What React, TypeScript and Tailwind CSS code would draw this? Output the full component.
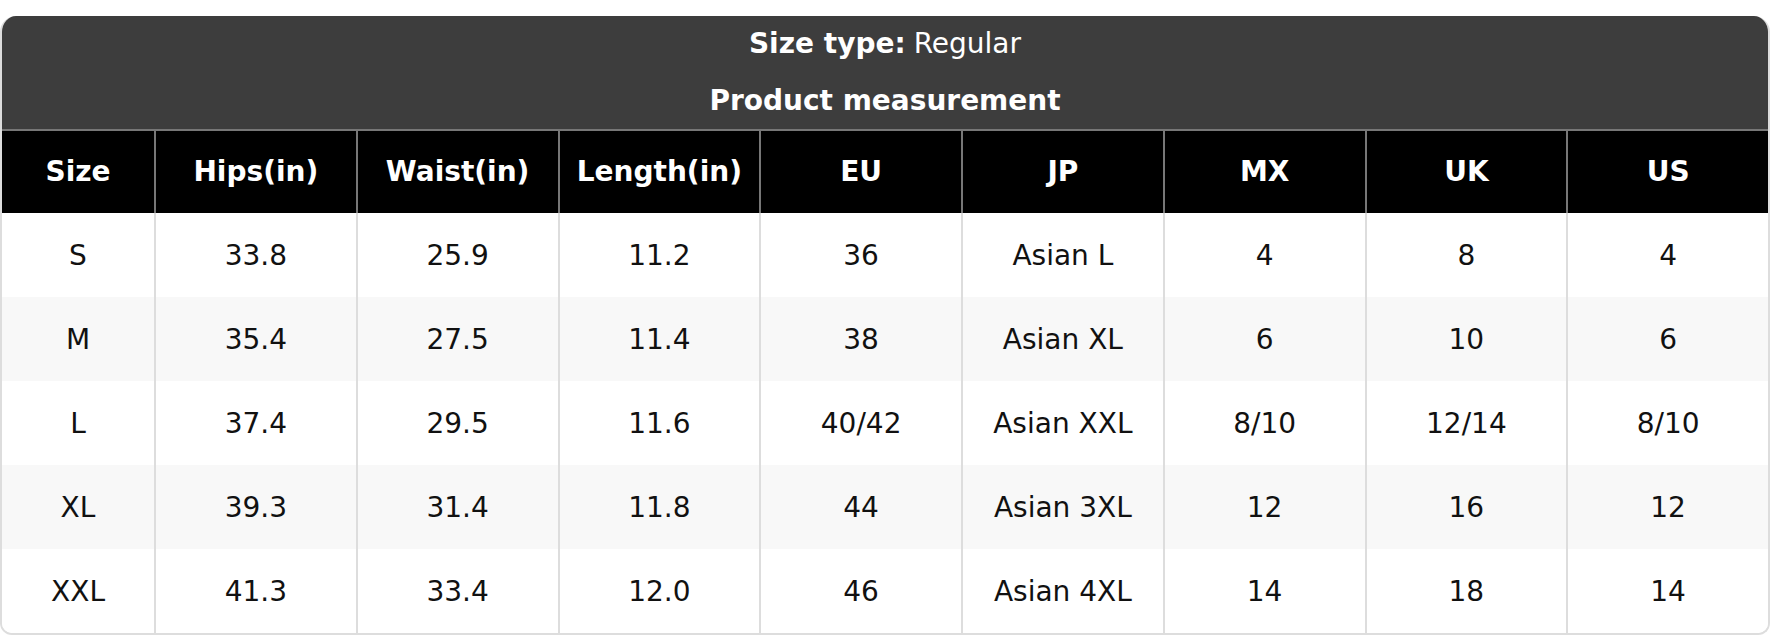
const headers = ["Size", "Hips(in)", "Waist(in)", "Length(in)", "EU", "JP", "MX", "UK", "US"];

const rows = [
    ["S", "33.8", "25.9", "11.2", "36", "Asian L", "4", "8", "4"],
    ["M", "35.4", "27.5", "11.4", "38", "Asian XL", "6", "10", "6"],
    ["L", "37.4", "29.5", "11.6", "40/42", "Asian XXL", "8/10", "12/14", "8/10"],
    ["XL", "39.3", "31.4", "11.8", "44", "Asian 3XL", "12", "16", "12"],
    ["XXL", "41.3", "33.4", "12.0", "46", "Asian 4XL", "14", "18", "14"],
];

export default function App() {
    return (
        <div className="min-h-screen bg-white pt-4 font-['DejaVu_Sans',sans-serif] text-[28px]">
            <div className="overflow-hidden rounded-t-2xl rounded-b-xl border-2 border-t-0 border-[#dddddd]">
                {/* Title block */}
                <div className="flex h-[113px] flex-col items-center bg-[#3d3d3d] pt-[8px] text-white">
                    <div className="flex h-10 items-center">
                        <span className="font-bold">Size type:</span>
                        <span className="ml-2">Regular</span>
                    </div>
                    <div className="mt-[17px] flex h-10 items-center font-bold">Product measurement</div>
                </div>

                {/* Column headers */}
                <div className="grid h-[84px] grid-cols-[152px_repeat(8,minmax(0,1fr))] border-t-2 border-[#777777] bg-black font-bold text-white">
                    {headers.map((h, i) => (
                        <div
                            key={h}
                            className={`flex items-center justify-center ${i > 0 ? "border-l-2 border-[#777777]" : ""}`}
                        >
                            {h}
                        </div>
                    ))}
                </div>

                {/* Body rows */}
                {rows.map((row, r) => (
                    <div
                        key={row[0]}
                        className={`grid h-[84px] grid-cols-[152px_repeat(8,minmax(0,1fr))] pt-[2px] text-[#111111] ${r % 2 === 1 ? "bg-[#f8f8f8]" : "bg-white"}`}
                    >
                        {row.map((cell, i) => (
                            <div
                                key={i}
                                className={`-mt-[2px] flex items-center justify-center pt-[2px] ${i > 0 ? "border-l-2 border-[#dddddd]" : ""}`}
                            >
                                {cell}
                            </div>
                        ))}
                    </div>
                ))}
            </div>
        </div>
    );
}
